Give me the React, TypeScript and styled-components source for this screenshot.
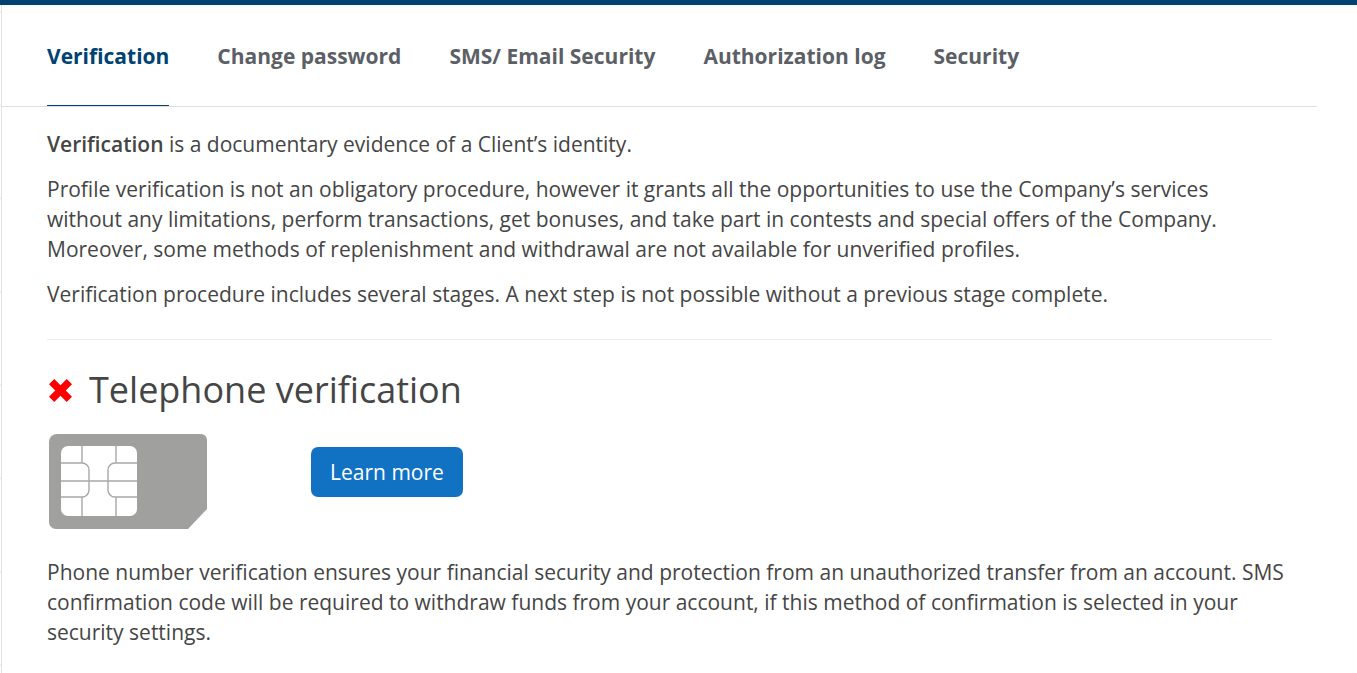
import React from "react";
import styled, { createGlobalStyle } from "styled-components";

const GlobalStyle = createGlobalStyle`
  html, body {
    margin: 0;
    padding: 0;
    background: #fff;
    overflow: hidden;
  }
  body {
    font-family: "Open Sans", "Liberation Sans", sans-serif;
    color: #454545;
  }
`;

const TopBar = styled.div`
  height: 5px;
  background: #004272;
`;

const Page = styled.div`
  display: flex;
  height: 668px;
`;

const Gutter = styled.div`
  flex: none;
  width: 1px;
  background: linear-gradient(to top, #e6e6e6 1px, transparent 1px) 0 7.33px / 1px 93.33px repeat-y;
`;

const Panel = styled.div`
  width: 1316px;
  border-left: 1px solid #e2e2e2;
  box-sizing: border-box;
`;

const Tabs = styled.nav`
  display: flex;
  gap: 48px;
  height: 101px;
  padding-left: 45px;
  border-bottom: 1px solid #dedede;
`;

const Tab = styled.a<{ $active?: boolean }>`
  height: 100px;
  line-height: 102px;
  font-size: 21px;
  font-weight: 700;
  color: ${(props) => (props.$active ? "#004272" : "#5c5f66")};
  border-bottom: 1px solid ${(props) => (props.$active ? "#004272" : "transparent")};
`;

const Content = styled.div`
  padding: 22px 30px 0 45px;
  font-size: 21px;
  line-height: 30px;
`;

const Paragraph = styled.p`
  margin: 0 0 15px;
`;

const Lead = styled.strong`
  font-weight: 600;
`;

const Divider = styled.hr`
  width: 1225px;
  margin: 30px 0 0;
  border: 0;
  border-top: 1px solid #eaeaea;
`;

const Heading = styled.h2`
  display: flex;
  align-items: center;
  gap: 17px;
  margin: 25px 0 0 2px;
  font-size: 36px;
  line-height: 50px;
  font-weight: 400;
  color: #454545;
`;

const MediaRow = styled.div`
  display: flex;
  align-items: flex-start;
  margin: 19px 0 27px 2px;
`;

const SimImage = styled.svg`
  display: block;
  width: 160px;
  height: 96px;
  flex: none;
`;

const LearnButton = styled.button`
  width: 152px;
  height: 50px;
  margin: 13px 0 0 102px;
  padding: 0;
  border: 0;
  border-radius: 7px;
  background: #1172c4;
  color: #fff;
  font-family: inherit;
  font-size: 21px;
`;

const tabs = [
  "Verification",
  "Change password",
  "SMS/ Email Security",
  "Authorization log",
  "Security",
];

const CrossIcon = () => (
  <svg width="23" height="23" viewBox="0 0 24 24">
    <path
      d="M0 5.500 5.500 0 12 6.500 18.500 0 24 5.500 17.500 12 24 18.500 18.500 24 12 17.500 5.500 24 0 18.500 6.500 12z"
      fill="#ff0000"
    />
  </svg>
);

const SimCard = () => (
  <SimImage viewBox="0 0 160 96">
    <path
      d="M8 0H152a6 6 0 0 1 6 6V75L139 95H7a7 7 0 0 1-7-7V8a8 8 0 0 1 8-8z"
      fill="#a0a19f"
    />
    <rect x="12" y="12" width="76" height="70" rx="7" fill="#fff" />
    <g fill="none" stroke="#a8a8a8" strokeWidth="1.4">
      <path d="M33 12V29M33 63V82M67 12V29M67 63V82M12 47H88" />
      <path d="M12 29H33a7 7 0 0 1 7 7V56a7 7 0 0 1-7 7H12" />
      <path d="M88 29H66a7 7 0 0 0-7 7V56a7 7 0 0 0 7 7H88" />
    </g>
  </SimImage>
);

export default function App() {
  return (
    <>
      <GlobalStyle />
      <TopBar />
      <Page>
        <Gutter />
        <Panel>
          <Tabs>
            {tabs.map((tab, i) => (
              <Tab key={tab} $active={i === 0}>
                {tab}
              </Tab>
            ))}
          </Tabs>
          <Content>
            <Paragraph>
              <Lead>Verification</Lead> is a documentary evidence of a Client’s identity.
            </Paragraph>
            <Paragraph>
              Profile verification is not an obligatory procedure, however it grants all the
              opportunities to use the Company’s services without any limitations, perform
              transactions, get bonuses, and take part in contests and special offers of the
              Company. Moreover, some methods of replenishment and withdrawal are not available
              for unverified profiles.
            </Paragraph>
            <Paragraph>
              Verification procedure includes several stages. A next step is not possible
              without a previous stage complete.
            </Paragraph>
            <Divider />
            <Heading>
              <CrossIcon />
              Telephone verification
            </Heading>
            <MediaRow>
              <SimCard />
              <LearnButton>Learn more</LearnButton>
            </MediaRow>
            <Paragraph>
              Phone number verification ensures your financial security and protection from an
              unauthorized transfer from an account. SMS confirmation code will be required to
              withdraw funds from your account, if this method of confirmation is selected in
              your security settings.
            </Paragraph>
          </Content>
        </Panel>
      </Page>
    </>
  );
}
